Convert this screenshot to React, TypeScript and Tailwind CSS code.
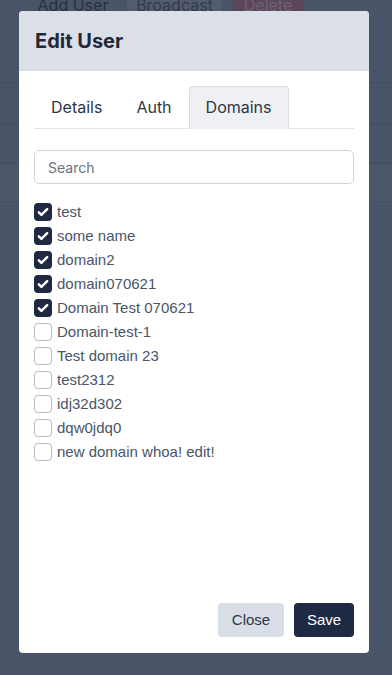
import React, { useState } from "react";

const domains = [
    { name: "test", checked: true },
    { name: "some name", checked: true },
    { name: "domain2", checked: true },
    { name: "domain070621", checked: true },
    { name: "Domain Test 070621", checked: true },
    { name: "Domain-test-1", checked: false },
    { name: "Test domain 23", checked: false },
    { name: "test2312", checked: false },
    { name: "idj32d302", checked: false },
    { name: "dqw0jdq0", checked: false },
    { name: "new domain whoa! edit!", checked: false },
];

const Checkbox: React.FC<{ checked: boolean; label: string; onToggle: () => void }> = ({
    checked,
    label,
    onToggle,
}) => {
    return (
        <label className="flex items-center h-6 cursor-pointer" onClick={onToggle}>
            {checked ? (
                <span className="w-[18px] h-[18px] rounded-[4px] bg-[#1e2a44] flex items-center justify-center shrink-0">
                    <svg width="14" height="14" viewBox="0 0 16 16" fill="none">
                        <path d="M3.2 8.4l3 3 6.6-6.8" stroke="#fff" strokeWidth="2.8" strokeLinecap="round" strokeLinejoin="round" />
                    </svg>
                </span>
            ) : (
                <span className="w-[18px] h-[18px] rounded-[4px] border border-[#b4bcc8] bg-white shrink-0" />
            )}
            <span className="ml-[5px] text-[15px] text-[#4a5568] font-['Liberation_Sans',Arial,sans-serif] leading-6">
                {label}
            </span>
        </label>
    );
};

export default function App() {
    const [items, setItems] = useState(domains);
    const toggle = (i: number) =>
        setItems((prev) => prev.map((d, j) => (j === i ? { ...d, checked: !d.checked } : d)));

    return (
        <div className="relative w-[392px] h-[675px] overflow-hidden bg-[#4a5468] font-['Inter',sans-serif]">
            {/* dimmed page behind the modal */}
            <div className="-mt-[15px]">
                <div className="flex items-center pl-[33px] h-[40px]">
                    <div className="h-full w-[80px] flex items-center justify-center text-[16px] text-[#283042]">Add User</div>
                    <div className="ml-[14px] h-full w-[95px] bg-[#525c6e] flex items-center justify-center text-[16px] text-[#323a4b]">
                        Broadcast
                    </div>
                    <div className="ml-[11px] h-full w-[70px] bg-[#5b4759] flex items-center justify-center text-[16px] text-[#6e6175]">
                        Delete
                    </div>
                </div>
                <div className="h-[58px] border-b border-[#434d60]" />
                <div className="h-[41px] border-b border-[#434d60]" />
                <div className="h-[40px] border-b border-[#434d60]" />
                <div className="h-[38px] border-b border-[#434d60] bg-[#4d576a]" />
            </div>

            {/* modal */}
            <div className="absolute left-[19px] top-[11px] w-[350px] h-[642px] bg-white rounded-[4px] flex flex-col overflow-hidden">
                <div className="bg-[#dbdfe7] h-[60px] px-4 flex items-center">
                    <h2 className="text-[20px] font-bold text-[#1f2937] leading-7">Edit User</h2>
                </div>
                <div className="flex-1 flex flex-col px-[15px] pt-[15px] pb-4">
                    <div className="flex border-b border-[#e2e6ec]">
                        <div className="px-4 py-2 border border-transparent text-[16px] leading-6 text-[#2d3748]">Details</div>
                        <div className="px-4 py-2 border border-transparent text-[16px] leading-6 text-[#2d3748]">Auth</div>
                        <div className="px-4 py-2 -mb-px border border-[#d9dde3] border-b-[#eef0f4] rounded-t-[4px] bg-[#eef0f4] text-[16px] leading-6 text-[#2d3748]">
                            Domains
                        </div>
                    </div>
                    <input
                        placeholder="Search"
                        className="mt-[21px] h-[34px] w-full rounded-[5px] border border-[#cfd5de] px-[13px] text-[14px] text-[#2d3748] placeholder:text-[#6b7280] outline-none"
                    />
                    <div className="mt-[16px] flex flex-col">
                        {items.map((d, i) => (
                            <Checkbox key={d.name} label={d.name} checked={d.checked} onToggle={() => toggle(i)} />
                        ))}
                    </div>
                    <div className="mt-auto flex justify-end gap-[10px]">
                        <button className="h-[34px] w-[66px] rounded-[4px] bg-[#d9dde6] text-[15px] text-[#2d3748] font-['Liberation_Sans',Arial,sans-serif]">
                            Close
                        </button>
                        <button className="h-[34px] w-[60px] rounded-[4px] bg-[#1e2a44] text-[15px] text-white font-['Liberation_Sans',Arial,sans-serif]">
                            Save
                        </button>
                    </div>
                </div>
            </div>
        </div>
    );
}
